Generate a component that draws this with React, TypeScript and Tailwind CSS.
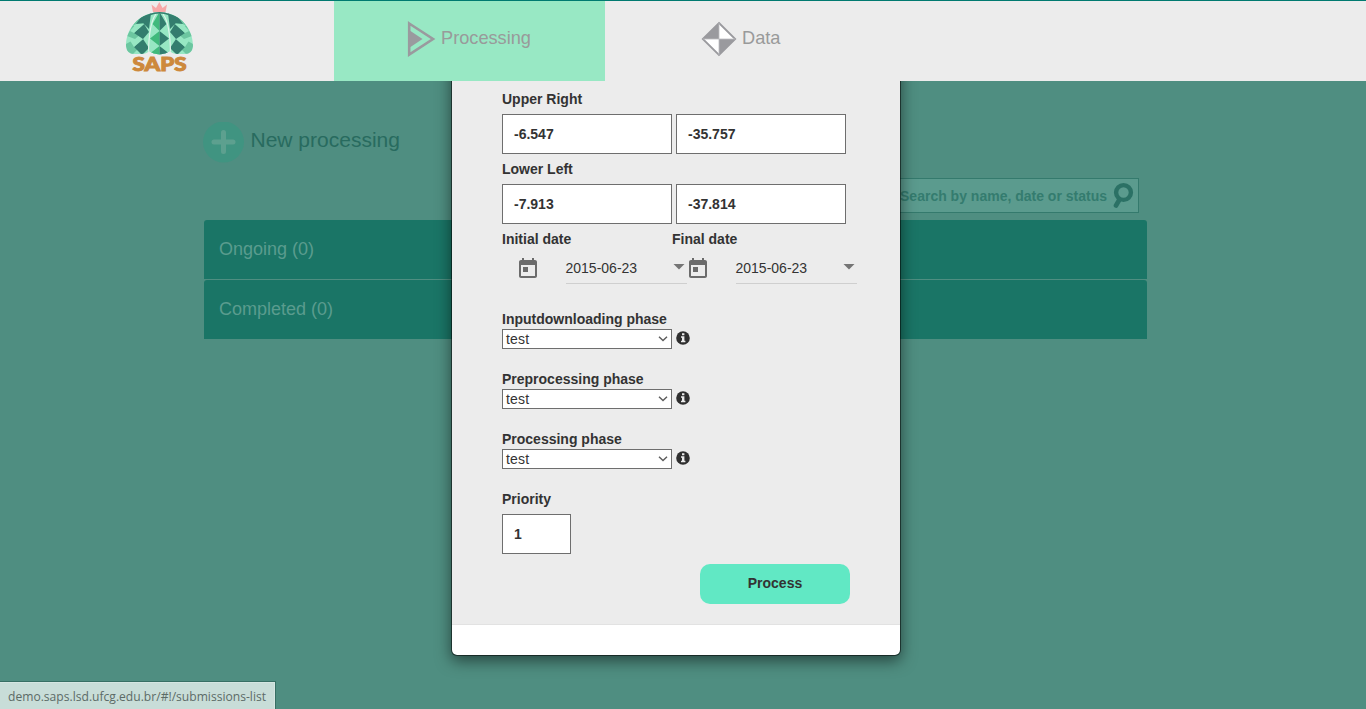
import React from 'react';

const font = "font-['Liberation_Sans',Arial,sans-serif]";

function Logo() {
  return (
    <svg width="69" height="72" viewBox="0 0 69 72" className="block">
      <path d="M28 10 L26.500 2.500 L31 6 L34.300 0 L37.600 6 L42 2.500 L40.500 10 Z" fill="#f7a8a8" />
      <defs>
        <clipPath id="dome">
          <path d="M24 12 C8 17 1 31 1 44 Q2 52 9 52 H16 Q22 52 24 49 Q28 52 34.500 52.500 Q41 52 45 49 Q47 52 53 52 H60 Q67 52 68 44 C68 31 61 17 45 12 Q34.500 8 24 12 Z" />
        </clipPath>
        <g id="lobe">
          <path d="M24 11 L14 14 L8 23 L18 22 Z M8 23 L2 34 L10 37 L18 30 Z M10 37 L1 42 V54 H6 L15 45 Z" fill="#6cc6a0" />
          <path d="M26 11 L16 15 L11 22 L18 21 L24 27 Z M19 22 L9 31 L18 37 L24 30 Z" fill="#337d6e" />
          <path d="M18 37 L9 45 L17 53 L24 46 Z" fill="#337d6e" />
          <path d="M11 22 H19 L9 31 L5 29 Z M18 37 L9 45 L4 37 Z" fill="#97e7c3" />
        </g>
      </defs>
      <g clipPath="url(#dome)">
        <rect width="69" height="54" fill="#97e7c3" />
        <use href="#lobe" />
        <use href="#lobe" transform="translate(69 0) scale(-1 1)" />
        <path d="M34.500 10 C26 18 24 34 24 54 H45 C45 34 43 18 34.500 10" fill="#97e7c3" />
        <path d="M34.500 10 L27.500 22 L34.500 29 Z M34.500 29 L25 36.500 L34.500 44 Z M34.500 44 L25.500 51 L34.500 54 Z" fill="#40b97c" />
        <path d="M34.500 10 L41.500 22 L34.500 29 Z M34.500 29 L44 36.500 L34.500 44 Z M34.500 44 L43.500 51 L34.500 54 Z" fill="#337d6e" />
        <path d="M31 12 C25 20 23.500 36 23.500 54 M38 12 C44 20 45.500 36 45.500 54" fill="none" stroke="#dff3ea" strokeWidth="1.200" />
        <path d="M24 12.500 Q34.500 8 45 12.500" fill="none" stroke="#337d6e" strokeWidth="2.400" />
      </g>
      <text x="7.500" y="69" fontFamily="Lato, sans-serif" fontWeight="900" fontSize="18.500" textLength="54" lengthAdjust="spacingAndGlyphs" fill="#cd893c" stroke="#cd893c" strokeWidth="1">SAPS</text>
    </svg>
  );
}

function Field({ value, width = 'w-[170px]' }: { value: string; width?: string }) {
  return (
    <div className={`flex h-10 items-center border border-[#6e6e6e] bg-white pl-[11px] text-sm font-bold ${width}`}>{value}</div>
  );
}

function DateField({ label }: { label: string }) {
  return (
    <div className="w-[170px] shrink-0">
      <div className="h-5 font-bold leading-5">{label}</div>
      <div className="flex h-[35px] pl-[14px]">
        <svg width="24" height="24" viewBox="0 0 24 24" className="mt-2 shrink-0" fill="#6b6b6b">
          <path d="M19 3h-1V1h-2v2H8V1H6v2H5c-1.110 0-1.990.9-1.990 2L3 19c0 1.100.89 2 2 2h14c1.100 0 2-.9 2-2V5c0-1.100-.9-2-2-2zm0 16H5V8h14v11zM7 10h5v5H7z" />
        </svg>
        <div className="ml-[25.5px] flex h-[35px] w-[121px] shrink-0 items-center border-b border-[#cfcfcf] pr-[2px] pt-[3px]">
          <span className="grow">2015-06-23</span>
          <svg width="12" height="6" viewBox="0 0 12 6" className="mb-[2px] shrink-0"><path d="M0.500 0 H11.500 L6 5.500 Z" fill="#757575" /></svg>
        </div>
      </div>
    </div>
  );
}

function Phase({ label }: { label: string }) {
  return (
    <div className="h-[60px]">
      <div className="h-5 font-bold leading-5">{label}</div>
      <div className="flex">
        <div className="flex h-5 w-[170px] items-center justify-between border border-[#6e6e6e] bg-white pl-[3px] pr-[3px]">
          <span className="tracking-[0.2px]">test</span>
          <svg width="10" height="6" viewBox="0 0 10 6"><path d="M1 0.800 L5 4.600 L9 0.800" fill="none" stroke="#5c5c5c" strokeWidth="1.400" /></svg>
        </div>
        <svg width="14" height="14" viewBox="0 0 14 14" className="ml-1 mt-[2px]">
          <circle cx="7" cy="7" r="6.800" fill="#2f2f2f" />
          <path d="M6 2.300 H8.400 V4.300 H6 Z M5 5.300 H8.400 V9.700 H9.400 V11.200 H5 V9.700 H6 V6.700 H5 Z" fill="#ececec" />
        </svg>
      </div>
    </div>
  );
}

export default function App() {
  return (
    <div className={`relative flex h-[709px] w-[1366px] flex-col overflow-hidden bg-[#4f8e81] text-sm text-[#333] ${font}`}>
      <header className="relative z-20 flex h-[81px] shrink-0 border-t border-[#007a70] bg-[#ececec] text-lg text-[#999a9a]">
        <div className="w-[334px] shrink-0 pl-[125px] pt-px"><Logo /></div>
        <div className="flex w-[271px] items-start bg-[#98e8c4] pl-[73px] pt-5">
          <svg width="29" height="36" viewBox="0 0 29 36">
            <path d="M2.200 2.500 L26 18 L2.200 33.500 Z" fill="none" stroke="#9a9a9e" strokeWidth="2.600" />
            <path d="M2 9 L15.500 18 L2 27 Z" fill="#9a9a9e" />
          </svg>
          <span className="ml-[5px] mt-[3px] text-[18.2px] leading-7">Processing</span>
        </div>
        <div className="flex items-start pl-24 pt-5">
          <svg width="36" height="36" viewBox="0 0 36 36">
            <path d="M18 2 L34.200 18 L18 34 L1.800 18 Z" fill="#fff" stroke="#9a9a9e" strokeWidth="1.800" />
            <path d="M18 2 V18 H2 Z M18 18 H34 L18 34 Z" fill="#9a9a9e" />
            <path d="M18 2 V34 M2 18 H34" stroke="#bdbdc0" strokeWidth="0.800" />
          </svg>
          <span className="ml-[5px] mt-[3px] text-[18.2px] leading-7">Data</span>
        </div>
      </header>

      <main className="ml-[204px] w-[943px] pt-[41px]">
        <div className="flex h-10 items-start">
          <svg width="42" height="42" viewBox="0 0 42 42" className="-ml-px shrink-0">
            <circle cx="20.500" cy="20" r="20.500" fill="#409481" />
            <path d="M20.500 10.500 V29.500 M11 20 H30" stroke="#5da08f" strokeWidth="5" strokeLinecap="round" />
          </svg>
          <h1 className="ml-[5.5px] mt-[2px] text-[21px] leading-8 text-[#286b5f]">New processing</h1>
        </div>
        <div className="mt-4 flex justify-end pr-2">
          <div className="flex h-[35px] w-[260px] items-center justify-end border border-[#347a6d] bg-[#5b9b8e] pr-1">
            <span className="font-bold text-[#347c6f]">Search by name, date or status</span>
            <svg width="21" height="27" viewBox="0 0 21 27" className="ml-[6px]">
              <circle cx="10.500" cy="10.500" r="7.400" fill="none" stroke="#2b7165" strokeWidth="4.400" />
              <path d="M6.500 17.500 L3 23.500" stroke="#2b7165" strokeWidth="4.600" strokeLinecap="round" />
            </svg>
          </div>
        </div>
        <section className="mt-[7px] flex flex-col gap-px text-lg text-[#5a9c8e]">
          <div className="flex h-[59px] items-center rounded-t-[3px] bg-[#1a7566] pb-[2px] pl-[15px]">Ongoing (0)</div>
          <div className="flex h-[59px] items-center rounded-t-[3px] bg-[#1a7566] pb-[2px] pl-[15px]">Completed (0)</div>
        </section>
      </main>

      <div role="dialog" className="absolute left-[451px] top-[30px] z-10 w-[450px] overflow-hidden rounded-md border border-black/50 bg-white bg-clip-padding shadow-[0_5px_15px_rgba(0,0,0,0.5)]">
        <div className="h-[594px] border-b border-[#e2e2e2] bg-[#ececec] pl-[50px] pt-[58px]">
          <div className="h-[25px] font-bold leading-5">Upper Right</div>
          <div className="flex gap-1"><Field value="-6.547" /><Field value="-35.757" /></div>
          <div className="mt-[5px] h-[25px] font-bold leading-5">Lower Left</div>
          <div className="flex gap-1"><Field value="-7.913" /><Field value="-37.814" /></div>
          <div className="mt-[5px] flex h-20"><DateField label="Initial date" /><DateField label="Final date" /></div>
          <Phase label="Inputdownloading phase" />
          <Phase label="Preprocessing phase" />
          <Phase label="Processing phase" />
          <div className="h-[25px] font-bold leading-5">Priority</div>
          <Field value="1" width="w-[69px]" />
          <button className="ml-[198px] mt-2.5 block h-10 w-[150px] rounded-[10px] bg-[#61e8c4] pb-[3px] font-bold">Process</button>
        </div>
        <div className="h-[30px]" />
      </div>

      <div className="absolute bottom-0 left-0 z-30 flex h-[28px] w-[276px] items-center whitespace-nowrap border-r border-t border-[#376f64] bg-[#c8ddd8] pl-2 pt-[2px] font-['Open_Sans',sans-serif] text-[12.1px] text-[#5c6b67] shadow-[inset_-1px_1px_0_#d5e6e2]">demo.saps.lsd.ufcg.edu.br/#!/submissions-list</div>
    </div>
  );
}
